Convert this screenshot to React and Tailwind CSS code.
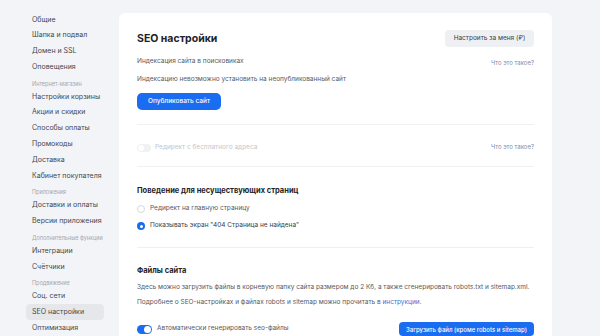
import React from "react";

const font = { fontFamily: "Inter, 'Noto Sans', sans-serif" };

function Item({ children, active }) {
  return (
    <div
      className={
        "h-[16px] flex items-center px-[6px] rounded-[4px] text-[7px] whitespace-nowrap text-[#45484d] " +
        (active ? "bg-[#e6e7eb]" : "")
      }
    >
      {children}
    </div>
  );
}

function Label({ children }) {
  return (
    <div className="h-[14px] flex items-end pb-[1px] px-[6px] text-[5.5px] whitespace-nowrap text-[#a3a7ae]">
      {children}
    </div>
  );
}

function Radio({ checked }) {
  return checked ? (
    <span className="w-[8px] h-[8px] rounded-full bg-[#1a6cf0] flex items-center justify-center shrink-0">
      <span className="w-[3px] h-[3px] rounded-full bg-white" />
    </span>
  ) : (
    <span className="w-[8px] h-[8px] rounded-full border border-[#d5d8de] bg-white shrink-0" />
  );
}

export default function App() {
  return (
    <div className="w-[600px] h-[336px] bg-[#f3f4f8] overflow-hidden flex whitespace-nowrap" style={font}>
      <div className="w-[119px] shrink-0 pl-[26px] pr-[15px] pt-[12px] flex flex-col">
        <Item>Общие</Item>
        <Item>Шапка и подвал</Item>
        <Item>Домен и SSL</Item>
        <Item>Оповещения</Item>
        <Label>Интернет-магазин</Label>
        <Item>Настройки корзины</Item>
        <Item>Акции и скидки</Item>
        <Item>Способы оплаты</Item>
        <Item>Промокоды</Item>
        <Item>Доставка</Item>
        <Item>Кабинет покупателя</Item>
        <Label>Приложения</Label>
        <Item>Доставки и оплаты</Item>
        <Item>Версии приложения</Item>
        <Label>Дополнительные функции</Label>
        <Item>Интеграции</Item>
        <Item>Счётчики</Item>
        <Label>Продвижение</Label>
        <Item>Соц. сети</Item>
        <Item active>SEO настройки</Item>
        <Item>Оптимизация</Item>
      </div>

      <div className="mt-[13px] w-[433px] shrink-0 bg-white rounded-t-[6px] px-[18px] pt-[17px] flex flex-col">
        <div className="h-[17px] flex items-center justify-between">
          <div className="text-[10.5px] font-bold text-[#1f2226]">SEO настройки</div>
          <div className="h-[17px] w-[89px] rounded-[4px] bg-[#eff0f3] flex items-center justify-center text-[6.5px] text-[#3a3d42]">
            Настроить за меня (₽)
          </div>
        </div>

        <div className="mt-[10px] h-[10px] flex items-center justify-between text-[6.5px]">
          <span className="text-[#55595f]">Индексация сайта в поисковиках</span>
          <span className="text-[6px] text-[#7f8aa6]">Что это такое?</span>
        </div>
        <div className="mt-[8px] h-[10px] flex items-center text-[6.5px] text-[#55595f]">
          Индексацию невозможно установить на неопубликованный сайт
        </div>
        <div className="mt-[8px] h-[17px] w-[84px] rounded-[5px] bg-[#1a6cf0] flex items-center justify-center text-[6.5px] font-medium text-white">
          Опубликовать сайт
        </div>

        <div className="mt-[14px] border-t border-[#eef0f3]" />

        <div className="mt-[17px] h-[12px] flex items-center justify-between">
          <div className="flex items-center gap-[4px]">
            <span className="w-[14px] h-[8px] rounded-full bg-[#f0f1f3] flex items-center pl-[1px]">
              <span className="w-[6px] h-[6px] rounded-full bg-white" />
            </span>
            <span className="text-[6.5px] text-[#c3c6cc]">Редирект с бесплатного адреса</span>
          </div>
          <span className="text-[6px] text-[#7f8aa6] -mt-[3px]">Что это такое?</span>
        </div>

        <div className="mt-[12px] border-t border-[#eef0f3]" />

        <div className="mt-[19px] h-[10px] flex items-center text-[7.5px] font-bold text-[#1f2226]">
          Поведение для несуществующих страниц
        </div>
        <div className="mt-[8px] h-[10px] flex items-center gap-[5px] text-[6.5px] text-[#55595f]">
          <Radio />
          <span>Редирект на главную страницу</span>
        </div>
        <div className="mt-[7px] h-[10px] flex items-center gap-[5px] text-[6.5px] text-[#3a3d42]">
          <Radio checked />
          <span>Показывать экран "404 Страница не найдена"</span>
        </div>

        <div className="mt-[16px] border-t border-[#eef0f3]" />

        <div className="mt-[18px] h-[10px] flex items-center text-[7.5px] font-bold text-[#1f2226]">
          Файлы сайта
        </div>
        <div className="mt-[7px] h-[10px] flex items-center text-[6.5px] text-[#55595f]">
          Здесь можно загрузить файлы в корневую папку сайта размером до 2 Кб, а также сгенерировать robots.txt и sitemap.xml.
        </div>
        <div className="mt-[5px] h-[10px] flex items-center text-[6.5px] text-[#55595f]">
          Подробнее о SEO-настройках и файлах robots и sitemap можно прочитать в&nbsp;
          <span className="text-[#3b6fd6]">инструкции</span>.
        </div>

        <div className="mt-[14px] h-[14px] flex items-center justify-between">
          <div className="flex items-center gap-[5px]">
            <span className="w-[15px] h-[9px] rounded-full bg-[#1a6cf0] flex items-center justify-end pr-[1px]">
              <span className="w-[7px] h-[7px] rounded-full bg-white" />
            </span>
            <span className="text-[6.5px] text-[#55595f]">Автоматически генерировать seo-файлы</span>
          </div>
          <div className="h-[14px] w-[135px] rounded-[4px] bg-[#1a6cf0] flex items-center justify-center text-[6px] font-medium text-white">
            Загрузить файл (кроме robots и sitemap)
          </div>
        </div>
      </div>
    </div>
  );
}
